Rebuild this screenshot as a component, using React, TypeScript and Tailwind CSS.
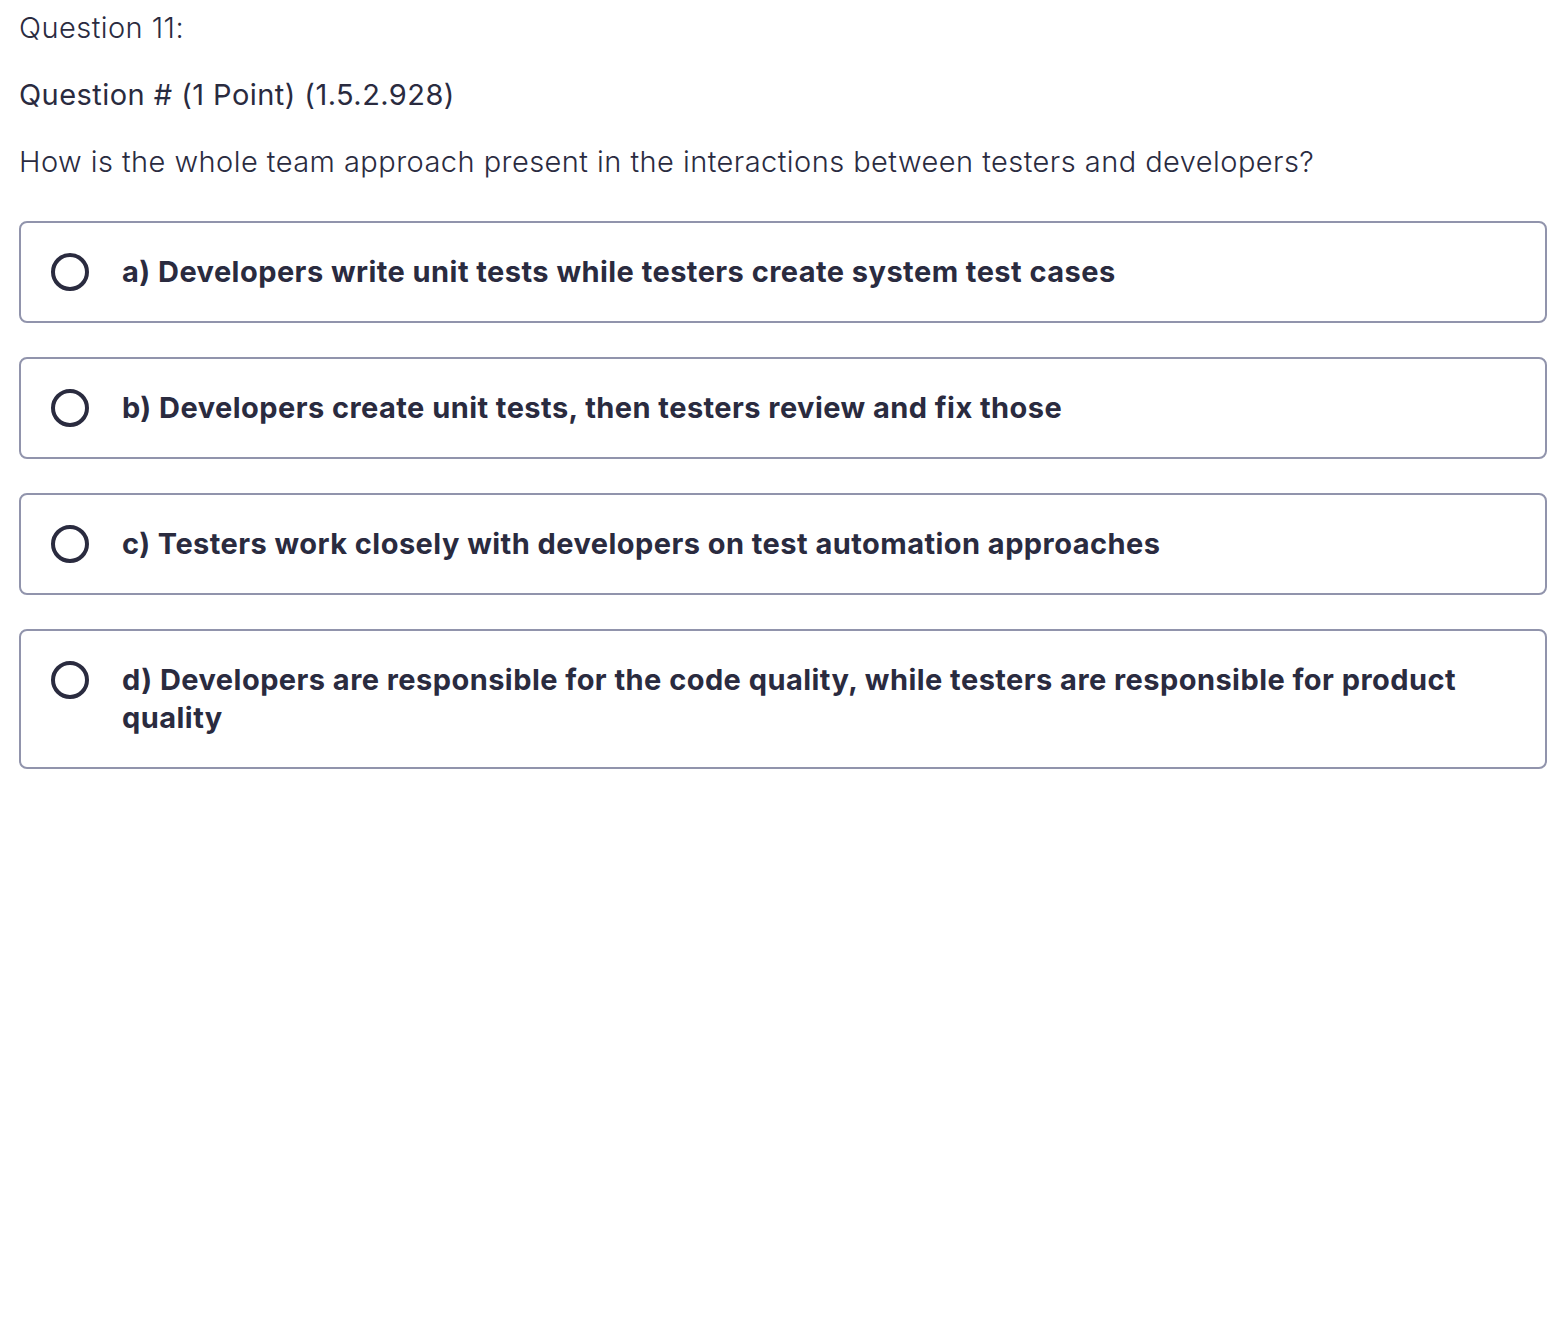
const options = [
  'a) Developers write unit tests while testers create system test cases',
  'b) Developers create unit tests, then testers review and fix those',
  'c) Testers work closely with developers on test automation approaches',
  'd) Developers are responsible for the code quality, while testers are responsible for product quality',
];

function Radio() {
  return (
    <span className="block h-[38px] w-[38px] shrink-0 rounded-full border-[4px] border-[#2a2b3f] bg-white" />
  );
}

export default function App() {
  return (
    <div
      className="min-h-[1336px] w-full bg-white px-[19px] pt-[9px] text-[#2a2b3f] tracking-[0.45px]"
      style={{ fontFamily: 'Inter, "Liberation Sans", sans-serif' }}
    >
      <div className="text-[29px] font-light leading-[38px]">Question 11:</div>
      <div className="mt-[29px] text-[29px] font-normal leading-[38px]">
        Question # (1 Point) (1.5.2.928)
      </div>
      <div className="mt-[29px] text-[29px] font-light leading-[38px]">
        How is the whole team approach present in the interactions between testers and developers?
      </div>

      <div className="mt-[40px] flex flex-col gap-[34px]">
        {options.map((opt) => (
          <label
            key={opt}
            className="flex cursor-pointer items-start gap-[33px] rounded-[8px] border-2 border-[#9194ac] py-[30px] pl-[30px] pr-[40px]"
          >
            <Radio />
            <span className="text-[29px] font-bold leading-[38px]">{opt}</span>
          </label>
        ))}
      </div>
    </div>
  );
}
